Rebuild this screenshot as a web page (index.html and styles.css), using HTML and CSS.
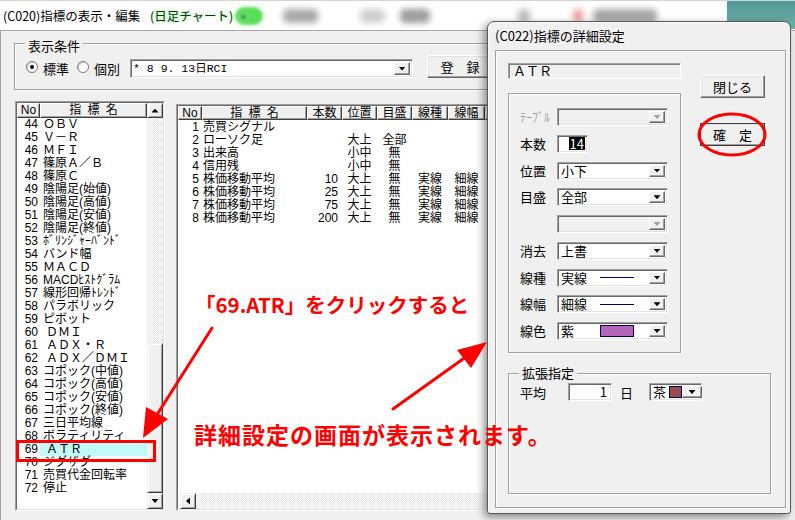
FILE: index.html
```html
<!DOCTYPE html>
<html lang="ja">
<head>
<meta charset="utf-8">
<title>(C020)指標の表示・編集</title>
<link rel="stylesheet" href="styles.css">
</head>
<body>
<div class="titlebar">
  <span class="title">(C020)指標の表示・編集</span>
  <span class="title-green">(日足チャート)<span class="glow">▾</span></span>
  <span class="blob b1"></span>
  <span class="blob b2"></span>
  <span class="blob b3"></span>
  <span class="blob b4"></span>
  <span class="blob b5"></span>
  <span class="blob b6"></span>
  <span class="blob b7"></span>
</div>

<div class="client">
  <div class="group cond">
    <span class="group-title cond-title">表示条件</span>
    <span class="radio checked"></span><span class="rlabel">標準</span>
    <span class="radio second"></span><span class="rlabel">個別</span>
    <div class="combo top-combo"><span class="ctext pre mono">* 8 9. 13日RCI</span><span class="abtn"><i class="tri"></i></span></div>
    <div class="btn reg">登　録</div>
  </div>

  <div class="lists">
    <div class="listbox left-list">
      <div class="list-inner">
        <div class="list-main">
          <div class="lhead"><span class="hcell">No</span><span class="hcell spaced">指 標 名</span></div>
          <div class="lrow"><span class="no">44</span><span class="nm">ＯＢＶ</span></div>
          <div class="lrow"><span class="no">45</span><span class="nm">Ｖ－Ｒ</span></div>
          <div class="lrow"><span class="no">46</span><span class="nm">ＭＦＩ</span></div>
          <div class="lrow"><span class="no">47</span><span class="nm">篠原Ａ／Ｂ</span></div>
          <div class="lrow"><span class="no">48</span><span class="nm">篠原Ｃ</span></div>
          <div class="lrow"><span class="no">49</span><span class="nm">陰陽足(始値)</span></div>
          <div class="lrow"><span class="no">50</span><span class="nm">陰陽足(高値)</span></div>
          <div class="lrow"><span class="no">51</span><span class="nm">陰陽足(安値)</span></div>
          <div class="lrow"><span class="no">52</span><span class="nm">陰陽足(終値)</span></div>
          <div class="lrow"><span class="no">53</span><span class="nm">ﾎﾞﾘﾝｼﾞｬｰﾊﾞﾝﾄﾞ</span></div>
          <div class="lrow"><span class="no">54</span><span class="nm">バンド幅</span></div>
          <div class="lrow"><span class="no">55</span><span class="nm">ＭＡＣＤ</span></div>
          <div class="lrow"><span class="no">56</span><span class="nm">MACDﾋｽﾄｸﾞﾗﾑ</span></div>
          <div class="lrow"><span class="no">57</span><span class="nm">線形回帰ﾄﾚﾝﾄﾞ</span></div>
          <div class="lrow"><span class="no">58</span><span class="nm">パラボリック</span></div>
          <div class="lrow"><span class="no">59</span><span class="nm">ピボット</span></div>
          <div class="lrow"><span class="no">60</span><span class="nm ind">ＤＭＩ</span></div>
          <div class="lrow"><span class="no">61</span><span class="nm ind">ＡＤＸ・Ｒ</span></div>
          <div class="lrow"><span class="no">62</span><span class="nm ind">ＡＤＸ／ＤＭＩ</span></div>
          <div class="lrow"><span class="no">63</span><span class="nm">コポック(中値)</span></div>
          <div class="lrow"><span class="no">64</span><span class="nm">コポック(高値)</span></div>
          <div class="lrow"><span class="no">65</span><span class="nm">コポック(安値)</span></div>
          <div class="lrow"><span class="no">66</span><span class="nm">コポック(終値)</span></div>
          <div class="lrow"><span class="no">67</span><span class="nm">三日平均線</span></div>
          <div class="lrow"><span class="no">68</span><span class="nm">ボラティリティ</span></div>
          <div class="lrow"><span class="no">69</span><span class="nm ind sel">ＡＴＲ</span></div>
          <div class="lrow"><span class="no">70</span><span class="nm">ジグザグ</span></div>
          <div class="lrow"><span class="no">71</span><span class="nm">売買代金回転率</span></div>
          <div class="lrow"><span class="no">72</span><span class="nm">停止</span></div>
        </div>
        <div class="vscroll">
          <span class="sbtn up"><i class="tri tri-up"></i></span>
          <span class="track vtrack"></span>
          <span class="thumb"></span>
          <span class="sbtn down"><i class="tri"></i></span>
        </div>
      </div>
    </div>

    <div class="listbox center-list">
      <div class="list-inner col">
        <div class="chead">
          <span class="hcell">No</span><span class="hcell spaced">指 標 名</span><span class="hcell">本数</span><span class="hcell">位置</span><span class="hcell">目盛</span><span class="hcell">線種</span><span class="hcell">線幅</span><span class="hcell">線色</span>
        </div>
        <div class="crows">
          <div class="crow"><span class="no">1</span><span class="nm">売買シグナル</span><span class="num"></span><span class="c"></span><span class="c"></span><span class="c"></span><span class="c"></span></div>
          <div class="crow"><span class="no">2</span><span class="nm">ローソク足</span><span class="num"></span><span class="c">大上</span><span class="c">全部</span><span class="c"></span><span class="c"></span></div>
          <div class="crow"><span class="no">3</span><span class="nm">出来高</span><span class="num"></span><span class="c">小中</span><span class="c">無</span><span class="c"></span><span class="c"></span></div>
          <div class="crow"><span class="no">4</span><span class="nm">信用残</span><span class="num"></span><span class="c">小中</span><span class="c">無</span><span class="c"></span><span class="c"></span></div>
          <div class="crow"><span class="no">5</span><span class="nm">株価移動平均</span><span class="num">10</span><span class="c">大上</span><span class="c">無</span><span class="c">実線</span><span class="c">細線</span></div>
          <div class="crow"><span class="no">6</span><span class="nm">株価移動平均</span><span class="num">25</span><span class="c">大上</span><span class="c">無</span><span class="c">実線</span><span class="c">細線</span></div>
          <div class="crow"><span class="no">7</span><span class="nm">株価移動平均</span><span class="num">75</span><span class="c">大上</span><span class="c">無</span><span class="c">実線</span><span class="c">細線</span></div>
          <div class="crow"><span class="no">8</span><span class="nm">株価移動平均</span><span class="num">200</span><span class="c">大上</span><span class="c">無</span><span class="c">実線</span><span class="c">細線</span></div>
        </div>
        <div class="hscroll">
          <span class="sbtn left"><i class="tri tri-left"></i></span>
          <span class="track htrack"></span>
        </div>
      </div>
    </div>
  </div>
</div>

<div class="dialog">
  <div class="dlg-title">(C022)指標の詳細設定</div>
  <div class="dlg-client">
    <div class="dlg-top">
      <div class="dlg-left">
        <div class="name-box">ＡＴＲ</div>
        <div class="group settings">
          <span class="lbl disabled">ﾃｰﾌﾞﾙ</span>
          <div class="combo dis"><span class="ctext"></span><span class="abtn"><i class="tri gray"></i></span></div>

          <span class="lbl">本数</span>
          <div class="edit count"><span class="selected">14</span></div>

          <span class="lbl">位置</span>
          <div class="combo"><span class="ctext">小下</span><span class="abtn"><i class="tri"></i></span></div>

          <span class="lbl">目盛</span>
          <div class="combo"><span class="ctext">全部</span><span class="abtn"><i class="tri"></i></span></div>

          <span class="lbl"></span>
          <div class="combo dis"><span class="ctext"></span><span class="abtn"><i class="tri gray"></i></span></div>

          <span class="lbl">消去</span>
          <div class="combo"><span class="ctext">上書</span><span class="abtn"><i class="tri"></i></span></div>

          <span class="lbl">線種</span>
          <div class="combo"><span class="ctext"><span class="cname">実線</span><span class="line-sample"></span></span><span class="abtn"><i class="tri"></i></span></div>

          <span class="lbl">線幅</span>
          <div class="combo"><span class="ctext"><span class="cname">細線</span><span class="line-sample"></span></span><span class="abtn"><i class="tri"></i></span></div>

          <span class="lbl">線色</span>
          <div class="combo"><span class="ctext"><span class="cname">紫</span><span class="swatch purple"></span></span><span class="abtn"><i class="tri"></i></span></div>
        </div>
      </div>
      <div class="dlg-buttons">
        <div class="btn dbtn">閉じる</div>
        <div class="btn dbtn default">確　定</div>
      </div>
    </div>
    <div class="group ext">
      <span class="group-title ext-title">拡張指定</span>
      <div class="ext-row">
        <span class="ext-lbl">平均</span>
        <div class="edit avg">1</div>
        <span class="day">日</span>
        <div class="combo color-combo"><span class="ctext"><span class="cname">茶</span><span class="swatch brown"></span></span><span class="abtn big"><i class="tri"></i></span></div>
      </div>
    </div>
  </div>
</div>

<svg class="overlay" width="795" height="520" viewBox="0 0 795 520" xmlns="http://www.w3.org/2000/svg">
  <rect x="17.5" y="441.5" width="137" height="19" fill="none" stroke="#ff0000" stroke-width="3"/>
  <line x1="212" y1="328" x2="153" y2="421" stroke="#ff0000" stroke-width="3" stroke-linecap="round"/>
  <polygon points="143,438 146,407 168,419" fill="#ff0000"/>
  <line x1="393" y1="409" x2="470" y2="354" stroke="#ff0000" stroke-width="3" stroke-linecap="round"/>
  <polygon points="487,342 457,350 471,368" fill="#ff0000"/>
  <ellipse cx="732" cy="134.5" rx="33" ry="20.5" fill="none" stroke="#ff0000" stroke-width="3"/>
</svg>

<div class="note note1">「69.ATR」をクリックすると</div>
<div class="note note2">詳細設定の画面が表示されます。</div>
</body>
</html>
```

FILE: styles.css
```css
* { box-sizing: border-box; }
html, body { margin: 0; padding: 0; }
body {
  width: 795px;
  height: 520px;
  overflow: hidden;
  position: relative;
  background: #f0f0f0;
  font-family: "Noto Sans CJK JP", "Noto Sans", sans-serif;
  font-size: 12px;
  color: #000;
}

/* ---------- main title bar ---------- */
.titlebar {
  height: 31px;
  background: #fff;
  border-top: 1px solid #d4d4d4;
  border-bottom: 1px solid #a8a8a8;
  display: flex;
  align-items: center;
  padding-left: 3px;
  overflow: hidden;
}
.title { width: 147px; flex: none; font-size: 12.5px; white-space: nowrap; }
.title-green {
  width: 113px; flex: none;
  display: flex; align-items: center;
  font-size: 12.5px; white-space: nowrap;
  color: #143214;
  text-shadow: 0 0 2px #a6f5a6, 0 0 5px #9ef29e;
}
.glow {
  width: 30px; height: 18px; margin-left: 2px;
  border-radius: 9px;
  background: #5ade5a;
  color: #2a6a2a;
  font-size: 10px; line-height: 18px; text-align: left; padding-left: 6px;
  filter: blur(1.5px);
}
.blob { flex: none; height: 14px; border-radius: 5px; filter: blur(3px); background: #b0b0b0; }
.b1 { margin-left: 20px; width: 35px; background: #a8a8a8; }
.b2 { margin-left: 42px; width: 25px; background: #cfcfcf; }
.b3 { margin-left: 15px; width: 30px; background: #9c9c9c; }
.b4 { margin-left: 88px; width: 12px; background: #bcbcbc; }
.b5 { margin-left: 43px; width: 10px; background: #f09a9a; }
.b6 { margin-left: 10px; width: 64px; background: #a6a6a6; }
.b7 { margin-left: 70px; width: 70px; height: 29px; align-self: flex-start; margin-top: -1px; border-radius: 0; filter: none; background: linear-gradient(#4f9893, #6fb0aa); }

/* ---------- client ---------- */
.client {
  height: 489px;
  border-left: 1px solid #a0a0a0;
  padding: 12px 0 0 13px;
}
.group {
  position: relative;
  border: 1px solid #a0a0a0;
  box-shadow: inset 1px 1px 0 #fff, 1px 1px 0 #fff;
}
.group-title {
  position: absolute;
  left: 10px;
  padding: 0 3px;
  background: #f0f0f0;
  font-size: 13px;
  line-height: 16px;
  white-space: nowrap;
}
.cond-title { top: -6px; }
.ext-title { top: -9px; }

.cond {
  width: 760px;
  height: 47px;
  padding: 11px 0 11px 11px;
  display: flex;
  align-items: flex-end;
}
.radio {
  flex: none;
  width: 12px; height: 12px;
  margin-bottom: 5px;
  border-radius: 50%;
  background: #fff;
  border: 1px solid #7a7a7a;
  box-shadow: inset 1px 1px 0 #d0d0d0;
  display: flex; align-items: center; justify-content: center;
}
.radio.checked::after {
  content: "";
  width: 4px; height: 4px; border-radius: 50%; background: #000;
}
.radio.second { margin-left: 8px; }
.rlabel { margin-left: 5px; font-size: 13px; line-height: 18px; }

.combo {
  display: flex;
  height: 18px;
  background: #fff;
  border: 1px solid;
  border-color: #a0a0a0 #fff #fff #a0a0a0;
  box-shadow: inset 1px 1px 0 #696969, inset -1px -1px 0 #e3e3e3;
  padding: 2px;
}
.combo.dis { background: #f0f0f0; }
.ctext {
  flex: 1;
  display: flex; align-items: center;
  padding-left: 1px;
  font-size: 13px;
  line-height: 14px;
  white-space: nowrap;
}
.pre { white-space: pre; }
.mono { font-family: "Liberation Mono", "Noto Sans CJK JP", monospace; }
.abtn {
  flex: none;
  width: 16px;
  background: #f0f0f0;
  border: 1px solid;
  border-color: #fff #696969 #696969 #fff;
  box-shadow: inset -1px -1px 0 #a0a0a0;
  display: flex; align-items: center; justify-content: center;
}
.abtn.big { width: 20px; }
.tri {
  display: block;
  width: 7px; height: 4px;
  background: #000;
  clip-path: polygon(0 0, 100% 0, 50% 100%);
}
.tri.gray { background: #a0a0a0; }
.tri-up { clip-path: polygon(50% 0, 100% 100%, 0 100%); }
.tri-left { width: 4px; height: 7px; clip-path: polygon(0 50%, 100% 0, 100% 100%); }

.top-combo { width: 283px; margin-left: 10px; height: 19px; }
.top-combo .ctext { font-size: 11.5px; padding-left: 0; flex: 1; min-width: 0; }

.btn {
  display: flex; align-items: center; justify-content: center;
  background: #f0f0f0;
  border: 1px solid;
  border-color: #fff #696969 #696969 #fff;
  box-shadow: inset -1px -1px 0 #a0a0a0, inset 1px 1px 0 #e3e3e3;
  font-size: 13px;
  white-space: nowrap;
}
.reg { width: 66px; height: 23px; margin-left: 14px; }

/* ---------- lists ---------- */
.lists { display: flex; align-items: flex-start; margin-top: 11px; margin-left: 1px; }
.listbox {
  border: 1px solid;
  border-color: #a0a0a0 #fff #fff #a0a0a0;
  flex: none;
}
.list-inner {
  height: 100%;
  border: 1px solid;
  border-color: #696969 #e3e3e3 #e3e3e3 #696969;
  background: #fff;
  display: flex;
}
.list-inner.col { flex-direction: column; }
.left-list { width: 150px; height: 410px; }
.center-list { width: 324px; height: 407px; margin-left: 11px; margin-top: 3px; }

.list-main { width: 130px; flex: none; }
.hcell {
  display: block;
  background: #f0f0f0;
  border: 1px solid;
  border-color: #fff #404040 #404040 #fff;
  box-shadow: inset -1px -1px 0 #a0a0a0;
  text-align: center;
  font-family: "Liberation Sans", "Noto Sans CJK JP", sans-serif;
  font-size: 12px;
  line-height: 12px;
  white-space: nowrap;
}
.spaced { word-spacing: 3px; }
.lhead { display: grid; grid-template-columns: 23px 107px; height: 15px; }
.lrow, .crow {
  font-family: "Liberation Sans", "Noto Sans CJK JP", sans-serif;
  font-size: 12px;
  height: 13px;
  line-height: 13px;
}
.lrow { display: grid; grid-template-columns: 23px 107px; }
.no { text-align: right; padding-right: 2px; }
.nm { padding-left: 3px; white-space: nowrap; }
.nm.ind { padding-left: 6px; }
.nm.sel { background: #c2f9f9; }

.vscroll { width: 16px; flex: none; display: flex; flex-direction: column; }
.sbtn {
  flex: none;
  background: #f0f0f0;
  border: 1px solid;
  border-color: #f0f0f0 #404040 #404040 #f0f0f0;
  box-shadow: inset 1px 1px 0 #fff, inset -1px -1px 0 #a0a0a0;
  display: flex; align-items: center; justify-content: center;
}
.sbtn.up { height: 15px; }
.sbtn.down { height: 16px; }
.sbtn.left { width: 16px; height: 16px; }
.track { background: repeating-conic-gradient(#fff 0 25%, #e6e6e6 0 50%) 0 0 / 2px 2px; }
.vtrack { height: 225px; flex: none; }
.htrack { flex: 1; }
.thumb {
  flex: 1;
  background: #f0f0f0;
  border: 1px solid;
  border-color: #f0f0f0 #404040 #404040 #f0f0f0;
  box-shadow: inset 1px 1px 0 #fff, inset -1px -1px 0 #a0a0a0;
}

.chead {
  display: grid;
  grid-template-columns: 24px 105px 35px 35px 35px 36px 37px 40px;
  height: 14px;
  flex: none;
}
.crows { flex: 1; padding-top: 1px; }
.crow {
  display: grid;
  grid-template-columns: 24px 105px 35px 35px 35px 36px 37px;
}
.crow .no { padding-right: 3px; }
.crow .nm { padding-left: 1px; }
.crow .num { text-align: right; padding-right: 4px; }
.crow .c { text-align: center; white-space: nowrap; }
.hscroll { height: 16px; flex: none; display: flex; padding-left: 2px; }

/* ---------- dialog ---------- */
.dialog {
  position: absolute;
  left: 487px; top: 21px;
  width: 304px; height: 493px;
  background: #f0f0f0;
  border: 1px solid #5a5a5a;
  border-radius: 7px 7px 3px 3px;
  box-shadow: -3px 3px 9px rgba(0, 0, 0, 0.45), inset 1px 1px 0 #fafafa;
  display: flex; flex-direction: column;
  z-index: 5;
}
.dlg-title { height: 28px; line-height: 28px; padding-left: 7px; font-size: 13px; flex: none; }
.dlg-client {
  flex: 1;
  margin: 0 4px 5px 7px;
  border: 1px solid #a0a0a0;
  box-shadow: inset 1px 1px 0 #fff, 1px 1px 0 #fff;
  padding: 12px 0 0 12px;
}
.dlg-top { display: flex; align-items: flex-start; }
.dlg-left { width: 173px; flex: none; }
.name-box {
  height: 16px;
  border: 1px solid;
  border-color: #a0a0a0 #fff #fff #a0a0a0;
  box-shadow: inset 1px 1px 0 #808080;
  padding-left: 4px;
  font-size: 13px; line-height: 14px;
}
.settings {
  margin-top: 14px;
  height: 260px;
  padding: 14px 0 0 11px;
  display: grid;
  grid-template-columns: 37px 111px;
  grid-auto-rows: 18px;
  row-gap: 8.75px;
}
.lbl { font-size: 13px; line-height: 18px; white-space: nowrap; }
.lbl.disabled { color: #a3a3a3; font-size: 12px; }
.edit {
  height: 18px;
  background: #fff;
  border: 1px solid;
  border-color: #a0a0a0 #fff #fff #a0a0a0;
  box-shadow: inset 1px 1px 0 #696969, inset -1px -1px 0 #e3e3e3;
  display: flex; align-items: center; justify-content: flex-end;
  font-size: 13px; line-height: 14px;
}
.count { width: 31px; padding-right: 2px; }
.selected { background: #000; color: #fff; padding: 0 1px; line-height: 13px; }
.cname { width: 39px; flex: none; }
.line-sample { width: 34px; height: 1px; background: #000080; flex: none; }
.swatch { flex: none; border: 1px solid #000060; }
.swatch.purple { width: 34px; height: 12px; background: #b565b5; }
.swatch.brown { width: 13px; height: 12px; background: #9a4e4a; margin-left: 3px; }

.dlg-buttons { margin-left: 19px; margin-top: 12px; display: flex; flex-direction: column; gap: 25px; }
.dbtn { width: 65px; height: 23px; }
.dbtn.default { outline: 1px solid #3c3c3c; outline-offset: -1px; }

.ext { margin-top: 20px; width: 263px; height: 121px; padding: 9px 0 0 11px; }
.ext-row { display: flex; align-items: center; height: 18px; }
.ext-lbl { width: 48px; font-size: 13px; }
.avg { width: 44px; padding-right: 4px; }
.day { margin-left: 8px; width: 29px; font-size: 13px; }
.color-combo { width: 53px; }
.color-combo .cname { width: auto; }

/* ---------- annotations ---------- */
.overlay { position: absolute; left: 0; top: 0; z-index: 10; pointer-events: none; }
.note {
  position: absolute;
  z-index: 11;
  color: #ff0000;
  font-weight: 700;
  white-space: nowrap;
}
.note1 { left: 195px; top: 292px; font-size: 20.5px; line-height: 24px; }
.note2 { left: 194px; top: 421px; font-size: 23px; line-height: 26px; letter-spacing: 1px; }
```
